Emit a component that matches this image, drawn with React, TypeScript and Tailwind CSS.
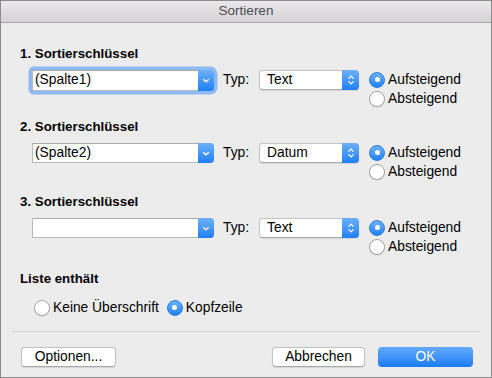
import React from "react";

const font = { fontFamily: '"Liberation Sans", Arial, sans-serif' };

function Radio({ on }: { on: boolean }) {
  if (on) {
    return (
      <div className="w-[16px] h-[16px] rounded-full bg-gradient-to-b from-[#6ab2fb] to-[#1f80f5] border border-[#2c7fe4] flex items-center justify-center shrink-0">
        <div className="w-[5px] h-[5px] rounded-full bg-white" />
      </div>
    );
  }
  return (
    <div className="w-[16px] h-[16px] rounded-full bg-white border border-[#a6a6a6] shadow-[0_0.5px_0.5px_rgba(0,0,0,0.15)] shrink-0" />
  );
}

function RadioRow({ on, label }: { on: boolean; label: string }) {
  return (
    <div className="h-[19px] flex items-center gap-[3px]">
      <Radio on={on} />
      <span className="text-[13.8px] leading-[16px] text-black">{label}</span>
    </div>
  );
}

function Combo({ value, focused }: { value: string; focused?: boolean }) {
  return (
    <div
      className={
        "ml-[12px] w-[182px] h-[20px] flex bg-white border border-[#b9b9b9] border-t-[#a9a9a9] rounded-r-[4px] " +
        (focused ? "shadow-[0_0_0_3.5px_#8dbaf3] rounded-[2px] h-[21px]" : "")
      }
    >
      <div className="flex-1 pl-[2px] text-[13.8px] leading-[18px] text-black">{value}</div>
      <div className="w-[16px] -my-px -mr-px rounded-r-[4px] bg-gradient-to-b from-[#6cb0fa] to-[#1c7ff5] flex items-center justify-center">
        <svg width="8" height="5" viewBox="0 0 8 5">
          <path d="M1.2 1.2L4 3.8l2.8-2.6" stroke="white" strokeWidth="1.3" fill="none" />
        </svg>
      </div>
    </div>
  );
}

function Select({ value }: { value: string }) {
  return (
    <div className="ml-[10px] w-[100px] h-[20px] flex bg-white border border-[#c4c4c4] border-b-[#ababab] rounded-[4px] shadow-[0_0.5px_1px_rgba(0,0,0,0.1)]">
      <div className="flex-1 pl-[7px] text-[13.8px] leading-[18px] text-black">{value}</div>
      <div className="w-[17px] -my-px -mr-px rounded-r-[4px] bg-gradient-to-b from-[#6cb0fa] to-[#1c7ff5] flex items-center justify-center">
        <svg width="8" height="12" viewBox="0 0 8 12">
          <path d="M1.5 4.6L4 2.1l2.5 2.5M1.5 7.4L4 9.9l2.5-2.5" stroke="white" strokeWidth="1.3" fill="none" />
        </svg>
      </div>
    </div>
  );
}

function Section({
  title,
  combo,
  focused,
  typ,
  className,
}: {
  title: string;
  combo: string;
  focused?: boolean;
  typ: string;
  className?: string;
}) {
  return (
    <div className={className}>
      <div className="font-bold text-[13.3px] leading-[16px] text-black">{title}</div>
      <div className="flex items-start mt-[8px]">
        <Combo value={combo} focused={focused} />
        <span className="ml-[9px] text-[13.8px] leading-[20px] text-black">Typ:</span>
        <Select value={typ} />
        <div className="ml-[10px] flex flex-col">
          <RadioRow on={true} label="Aufsteigend" />
          <RadioRow on={false} label="Absteigend" />
        </div>
      </div>
    </div>
  );
}

export default function App() {
  return (
    <div
      style={font}
      className="w-[492px] h-[378px] bg-[#ececec] border border-[#8b8b8b] flex flex-col overflow-hidden"
    >
      <div className="h-[22px] shrink-0 border-b border-[#a8a8a8] bg-gradient-to-b from-[#ebe9eb] to-[#d4d2d4] flex items-center justify-center text-[13.5px] text-[#4d4d4d]">
        Sortieren
      </div>
      <div className="pl-[19px] pt-[23px]">
        <Section title="1. Sortierschlüssel" combo="(Spalte1)" focused typ="Text" />
        <Section className="mt-[11px]" title="2. Sortierschlüssel" combo="(Spalte2)" typ="Datum" />
        <Section className="mt-[13px]" title="3. Sortierschlüssel" combo="" typ="Text" />
        <div className="mt-[15px] font-bold text-[13.3px] leading-[16px] text-black">Liste enthält</div>
        <div className="mt-[11px] ml-[14px] flex items-center">
          <RadioRow on={false} label="Keine Überschrift" />
          <div className="ml-[8px]">
            <RadioRow on={true} label="Kopfzeile" />
          </div>
        </div>
      </div>
      <div className="mx-[11px] mt-[14px] h-px bg-[#d3d3d3]" />
      <div className="flex mt-[15px] pl-[20px] pr-[18px]">
        <div className="w-[95px] h-[20px] bg-white border border-[#c2c2c2] border-b-[#a9a9a9] rounded-[4px] text-[13.8px] leading-[18px] text-center text-black shadow-[0_0.5px_1px_rgba(0,0,0,0.1)]">
          Optionen...
        </div>
        <div className="flex-1" />
        <div className="w-[93px] h-[20px] bg-white border border-[#c2c2c2] border-b-[#a9a9a9] rounded-[4px] text-[13.8px] leading-[18px] text-center text-black shadow-[0_0.5px_1px_rgba(0,0,0,0.1)]">
          Abbrechen
        </div>
        <div className="ml-[13px] w-[95px] h-[20px] rounded-[4px] bg-gradient-to-b from-[#62aafa] to-[#187cf5] text-[13.8px] leading-[20px] text-center text-white">
          OK
        </div>
      </div>
    </div>
  );
}
